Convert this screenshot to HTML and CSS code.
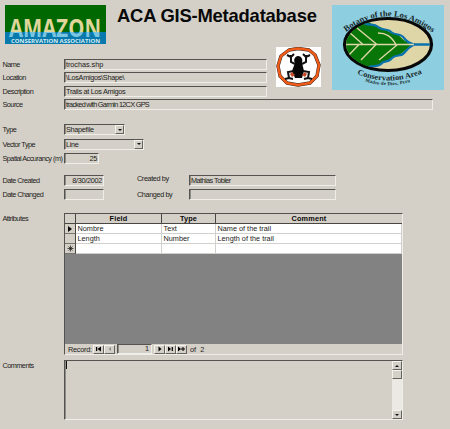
FILE: index.html
```html
<!DOCTYPE html>
<html lang="en">
<head>
<meta charset="utf-8">
<title>ACA GIS-Metadatabase</title>
<link rel="stylesheet" href="styles.css">
</head>
<body>
<main class="form">
  <header class="top">
    <svg class="amazon" viewBox="0 0 101 39" width="101" height="39">
      <defs><linearGradient id="az" gradientUnits="userSpaceOnUse" x1="0" y1="0" x2="0" y2="39"><stop offset="0.69" stop-color="#e0d69c"/><stop offset="0.69" stop-color="#78c5e2"/></linearGradient></defs>
      <rect width="101" height="39" fill="#006800"/>
      <rect y="27" width="101" height="12" fill="#0879ad"/>
      <text class="amazon-name" x="4" y="31.5" textLength="92" lengthAdjust="spacingAndGlyphs" fill="url(#az)">AMAZON</text>
      <text class="amazon-sub" x="6" y="37.6" textLength="89" lengthAdjust="spacingAndGlyphs">CONSERVATION ASSOCIATION</text>
    </svg>
    <h1 class="title">ACA GIS-Metadatabase</h1>
    <section class="fields">
      <div class="row"><label>Name</label><div class="input loose">trochas.shp</div></div>
      <div class="row"><label>Location</label><div class="input">\LosAmigos\Shape\</div></div>
      <div class="row"><label>Description</label><div class="input">Trails at Los Amigos</div></div>
    </section>
    <svg class="frog" viewBox="0 0 45 40" width="45" height="40">
      <rect width="45" height="40" fill="#fff"/>
      <path d="M13 3L22 1.5L33 3L39 8L43 18L41 29L34 36L22 38L11 36L4 29L2 19L5 9Z" fill="#fff" stroke="#332820" stroke-width="3.4" stroke-linejoin="round"/>
      <path d="M13 3L22 1.5L33 3L39 8L43 18L41 29L34 36L22 38L11 36L4 29L2 19L5 9Z" fill="none" stroke="#f05b19" stroke-width="2.5" stroke-linejoin="round"/>
      <path d="M22 9C26 9 27 13 26 16L28 24L26 31H19L16 24L19 16C17 13 19 9 22 9Z" fill="#080808"/>
      <path d="M19 17L15 15L15 8M15 10L11 8M15 10L18 7M26 17L30 15V8M30 10L34 8M30 10L27 7M18 24L12 25L13 31L9 32M13 31L17 32M27 24L33 25L32 31L36 32M32 31L28 32" fill="none" stroke="#111" stroke-width="2"/>
      <path d="M16 25L19 28L16 30L14 27ZM29 25L26 28L29 30L31 27Z" fill="#c84a27"/>
    </svg>
    <svg class="botany" viewBox="0 0 112 85" width="112" height="85">
      <defs>
        <path id="arcTop" d="M14 27Q56 -5 101 28"/>
        <path id="arcBottom" d="M25 69Q56 82 89 69"/>
        <path id="arcLow" d="M33 76.5Q56 84 80 76.5"/>
        <clipPath id="oval"><ellipse cx="56" cy="39.5" rx="42" ry="25"/></clipPath>
      </defs>
      <rect width="112" height="85" fill="#8dcfe0"/>
      <ellipse cx="56" cy="39.5" rx="43.5" ry="26" fill="#ded6a7" stroke="#080808" stroke-width="3.2"/>
      <g clip-path="url(#oval)">
        <path d="M10 10H31C36 20 43 19 48 22C55 24 57 29 65 29C70 33 73 38 82 39.5C73 43 72 49 64 51C58 53 55 58 49 58C45 63 38 61 33 63L10 70Z" fill="#087508"/>
        <path d="M32 18C36 21 42 18 46 22C50 26 56 23 59 27C64 31 69 28 72 33C75 37 77 38 82 39.5C77 42 75 44 72 48C69 52 64 49 60 53C57 58 52 55 49 59C45 63 40 59 35 63" fill="none" stroke="#0872ad" stroke-width="2.2"/>
        <path d="M82 39.5H101" stroke="#0872ad" stroke-width="2.5"/>
        <path d="M14 39.5H82M31 39.5L17 27M45 39.5L25 23M64 39.5C59 31 54 28 46 28M27 39.5L16 51M44 39.5L29 55M65 40L47 55" fill="none" stroke="#ded6a7" stroke-width="1.4"/>
      </g>
      <text class="bot-text top-text"><textPath href="#arcTop" textLength="94" lengthAdjust="spacingAndGlyphs">Botany of the Los Amigos</textPath></text>
      <text class="bot-text"><textPath href="#arcBottom" textLength="67" lengthAdjust="spacingAndGlyphs">Conservation Area</textPath></text>
      <text class="bot-small"><textPath href="#arcLow" textLength="46">Madre de Dios, Peru</textPath></text>
    </svg>
  </header>

  <div class="row source"><label>Source</label><div class="input dense">tracked with Garmin 12CX GPS</div></div>

  <section class="types">
    <div class="row"><label>Type</label><div class="input combo w61"><span>Shapefile</span><i class="btn"><b class="down"></b></i></div></div>
    <div class="row"><label>Vector Type</label><div class="input combo w79"><span>Line</span><i class="btn"><b class="down"></b></i></div></div>
    <div class="row"><label>Spatial Accurancy (m)</label><div class="input num w35">25</div></div>
  </section>

  <section class="dates">
    <div class="row"><label>Date Created</label><div class="input num w40">8/30/2002</div><label class="by raised">Created by</label><div class="input w148 dense">Mathias Tobler</div></div>
    <div class="row"><label>Date Changed</label><div class="input w40"></div><label class="by">Changed by</label><div class="input w148"></div></div>
  </section>

  <section class="block attributes">
    <label>Attributes</label>
    <div class="sheet">
      <div class="grid">
        <div class="th"></div><div class="th">Field</div><div class="th">Type</div><div class="th">Comment</div>
        <div class="sel"><b class="right"></b></div><div class="td">Nombre</div><div class="td">Text</div><div class="td">Name of the trail</div>
        <div class="sel"></div><div class="td">Length</div><div class="td">Number</div><div class="td">Length of the trail</div>
        <div class="sel"><svg width="7" height="7" viewBox="0 0 7 7"><path d="M3.5 .5V6.5M.5 3.5H6.5M1.5 1.5L5.5 5.5M5.5 1.5L1.5 5.5" stroke="#111" stroke-width=".7"/></svg></div><div class="td"></div><div class="td"></div><div class="td"></div>
      </div>
      <div class="empty"></div>
      <div class="nav">
        <span class="record">Record:</span>
        <i class="btn"><svg width="9" height="6" viewBox="0 0 9 6"><path d="M2 1H3.2V5H2ZM7 .5V5.5L3.5 3Z"/></svg></i>
        <i class="btn off"><svg width="9" height="6" viewBox="0 0 9 6"><path d="M6 1V5L3.5 3Z"/></svg></i>
        <div class="input num page">1</div>
        <i class="btn"><svg width="9" height="6" viewBox="0 0 9 6"><path d="M3.5 .5V5.5L6.5 3Z"/></svg></i>
        <i class="btn"><svg width="9" height="6" viewBox="0 0 9 6"><path d="M2 .5V5.5L5 3ZM5.7 1H6.9V5H5.7Z"/></svg></i>
        <i class="btn"><svg width="9" height="6" viewBox="0 0 9 6"><path d="M1 .5V5.5L4 3ZM4 2.5H8V3.5H4ZM5.5 1H6.5V5H5.5Z"/></svg></i>
        <span class="of">of&nbsp; 2</span>
      </div>
    </div>
  </section>

  <section class="block comments">
    <label>Comments</label>
    <div class="input memo">
      <span class="caret"></span>
      <div class="scroll"><i class="btn"><b class="up"></b></i><i class="btn thumb"></i><i class="btn last"><b class="down"></b></i></div>
    </div>
  </section>
</main>
</body>
</html>
```
FILE: styles.css
```css
* { box-sizing: border-box; }
body {
  margin: 0;
  background: #d4d0c8;
  color: #1c1b19;
  font: 7.3px/9px "Liberation Sans", Arial, sans-serif;
  letter-spacing: -0.3px;
}
.form { width: 450px; height: 429px; overflow: hidden; }
svg { display: block; }

.top {
  display: grid;
  grid-template-columns: 112px 155px 65px 118px;
  grid-template-rows: 47px 52px;
  height: 99px;
}
.amazon { margin: 5px 0 0 5px; grid-area: 1 / 1; }
.title {
  grid-area: 1 / 2 / 2 / 4;
  margin: 4px 0 0 5px;
  font-size: 18.4px;
  line-height: 24px;
  letter-spacing: -0.2px;
  color: #090909;
  white-space: nowrap;
}
.fields { grid-area: 2 / 1 / 3 / 3; padding-top: 12px; }
.fields .row { margin-bottom: 2.4px; }
.frog { grid-area: 2 / 3; margin-left: 9px; }
.botany { grid-area: 1 / 4 / 3 / 5; margin-top: 5px; }
.amazon-name { font: bold 25.5px "Open Sans", sans-serif; letter-spacing: 0; }
.amazon-sub { font: bold 5.2px "Open Sans", sans-serif; fill: #d8edf2; letter-spacing: 0; }
.bot-text { font: bold 7.8px "Liberation Serif", serif; fill: #19282b; letter-spacing: 0; }
.top-text { font-size: 8.4px; }
.bot-small { font: bold 4.8px "Liberation Serif", serif; fill: #19282b; letter-spacing: 0; }

.row { display: flex; height: 11px; }
label { width: 64px; padding-left: 2.5px; flex: none; line-height: 12px; letter-spacing: -0.53px; white-space: nowrap; }
.input {
  height: 11px;
  flex: 1;
  padding-left: 1px;
  border: 1px solid #77746e;
  border-top-color: #55534f;
  border-left-color: #55534f;
  border-right-color: #f0eee8;
  border-bottom-color: #f0eee8;
  box-shadow: inset 1px 0 #8f8c85;
  white-space: nowrap;
}
.loose { letter-spacing: -0.05px; }
.dense { letter-spacing: -0.7px; }
.w148.dense { letter-spacing: -0.55px; }
.w35, .w40, .w61, .w79, .w148 { flex: none; }
.w35 { width: 35px; }
.w40 { width: 40px; }
.w61 { width: 61px; }
.w79 { width: 80px; }
.w148 { width: 147px; }
.num { text-align: right; padding-right: 1px; }
.source { width: 433px; }
.types { display: grid; row-gap: 3.5px; margin-top: 14px; }
.dates { display: grid; row-gap: 3px; margin-top: 11px; }
.by { width: 85px; padding-left: 33px; letter-spacing: -0.4px; }
.raised { line-height: 7px; }

.btn {
  display: flex;
  align-items: center;
  justify-content: center;
  background: #d4d0c8;
  border: 1px solid #f5f3ed;
  border-right-color: #66635e;
  border-bottom-color: #66635e;
}
.combo { display: flex; justify-content: space-between; }
.combo .btn { width: 9px; height: 9px; }
.down, .up { border: 2px solid transparent; width: 0; height: 0; }
.down { border-top-color: #111; border-bottom: 0; }
.up { border-bottom-color: #111; border-top: 0; }
.right { border: 3px solid transparent; border-left: 4px solid #080808; border-right: 0; }

.block { display: flex; }
.attributes { margin-top: 13px; }
.sheet {
  width: 339px;
  height: 142px;
  border: 1px solid #55534f;
  border-right-color: #f0eee8;
  border-bottom-color: #f0eee8;
  letter-spacing: 0;
}
.grid {
  display: grid;
  grid-template-columns: 11px 86px 54px 1fr;
  grid-template-rows: 10px 10px 10px 10px;
}
.th { font-weight: bold; text-align: center; letter-spacing: 0.18px; color: #080808; border-right: 1px solid #494743; border-bottom: 1px solid #494743; line-height: 10px; }
.th:nth-child(4) { border-right: 0; }
.td { background: #fff; border-right: 1px solid #d2d0cc; border-bottom: 1px solid #d2d0cc; padding-left: 1.5px; line-height: 10px; }
.sel { display: flex; align-items: center; justify-content: center; border-right: 1px solid #494743; border-bottom: 1px solid #77736e; }
.empty { height: 90px; background: #828282; }
.nav { display: flex; align-items: center; height: 10px; }
.nav .btn { width: 11px; height: 9px; }
.nav .off { fill: #8e8b84; }
.record { width: 28px; flex: none; padding-left: 3px; letter-spacing: -0.25px; }
.nav .page { width: 35px; flex: none; height: 10px; margin: 0 2px; padding-right: 2px; line-height: 8px; }
.of { padding-left: 3px; }

.comments { margin-top: 5px; }
.comments label { line-height: 11px; }
.memo { display: flex; justify-content: space-between; flex: none; width: 339px; height: 60px; }
.caret { width: 1px; height: 8px; background: #111; }
.scroll { display: flex; flex-direction: column; width: 10px; background: #ece9e5; }
.scroll .btn { height: 9px; flex: none; }
.scroll .last { margin-top: auto; }
```
